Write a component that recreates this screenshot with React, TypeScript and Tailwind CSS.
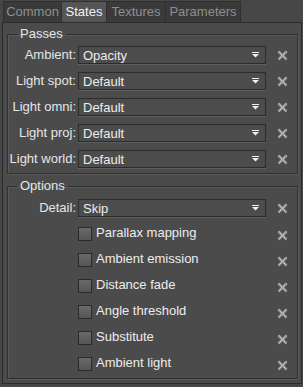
import React from 'react';

const tabs = [
  { label: 'Common', w: 'w-[59px]' },
  { label: 'States', w: 'w-[46px]', active: true },
  { label: 'Textures', w: 'w-[60px]' },
  { label: 'Parameters', w: 'w-[76px]' },
];

const passes = [
  { label: 'Ambient:', value: 'Opacity' },
  { label: 'Light spot:', value: 'Default' },
  { label: 'Light omni:', value: 'Default' },
  { label: 'Light proj:', value: 'Default' },
  { label: 'Light world:', value: 'Default' },
];

const options = ['Parallax mapping', 'Ambient emission', 'Distance fade', 'Angle threshold', 'Substitute', 'Ambient light'];

// dithered grey cross used as the "reset" button
const ClearIcon = () => (
  <svg width="11" height="11" viewBox="0 0 11 11" className="block">
    <path d="M1.5 1.5 L9.5 9.5 M9.5 1.5 L1.5 9.5" stroke="#8c8c8c" strokeWidth="2.6" />
    <path d="M1.5 1.5 L9.5 9.5 M9.5 1.5 L1.5 9.5" stroke="#d6d6d6" strokeWidth="1.2" strokeDasharray="1 1" />
  </svg>
);

const Combo = ({ value }: { value: string }) => (
  <div className="w-[188px] h-[18px] flex items-center justify-between pl-[4px] pr-[6px] bg-[#4c4c4c] border border-[#2c2c2c] shadow-[0_1px_0_#5e5e5e] text-[#ededed]">
    <span className="leading-none">{value}</span>
    <svg width="7" height="6" viewBox="0 0 7 6" className="block">
      <rect x="0" y="0" width="7" height="1" fill="#f0f0f0" />
      <path d="M0 2 H7 L3.5 5.5 Z" fill="#f0f0f0" />
    </svg>
  </div>
);

const Group = ({ title, children, className }: { title: string; children: React.ReactNode; className?: string }) => (
  <fieldset className={`border border-[#2f2f2f] shadow-[inset_1px_1px_0_#5a5a5a,1px_1px_0_#5a5a5a] ml-[4px] mr-[3px] ${className ?? ''}`}>
    <legend className="ml-[9px] px-[3px] text-[#e6e6e6] leading-[14px]">{title}</legend>
    {children}
  </fieldset>
);

const App: React.FC = () => {
  return (
    <div className="w-[303px] h-[387px] bg-[#474747] font-['Liberation_Sans',Arial,sans-serif] text-[13px] overflow-hidden">
      <div className="flex pl-[3px] pt-[1px]">
        {tabs.map((t) => (
          <div
            key={t.label}
            className={`${t.w} h-[21px] flex items-center justify-center border border-b-0 border-[#303030] -ml-px first:ml-0 ${
              t.active ? 'bg-[#555555] text-[#f2f2f2]' : 'bg-[#3a3a3a] text-[#8e8e8e]'
            }`}
          >
            {t.label}
          </div>
        ))}
      </div>
      <div className="ml-[2px] mr-[1px] h-[362px] border border-[#2c2c2c] bg-[#4b4b4b] pt-[4px]">
        <Group title="Passes" className="h-[147px]">
          <div className="flex flex-col gap-[8px] pt-[5px]">
            {passes.map((p) => (
              <div key={p.label} className="flex items-center h-[18px]">
                <span className="w-[70px] text-right text-[#e6e6e6] pr-[2px] shrink-0 whitespace-nowrap">{p.label}</span>
                <Combo value={p.value} />
                <span className="ml-[11px]"><ClearIcon /></span>
              </div>
            ))}
          </div>
        </Group>
        <Group title="Options" className="h-[200px] mt-[5px]">
          <div className="flex flex-col gap-[8px] pt-[6px]">
            <div className="flex items-center h-[18px]">
              <span className="w-[70px] text-right text-[#e6e6e6] pr-[2px] shrink-0">Detail:</span>
              <Combo value="Skip" />
              <span className="ml-[11px]"><ClearIcon /></span>
            </div>
            {options.map((o) => (
              <div key={o} className="flex items-center h-[18px]">
                <span className="w-[70px] shrink-0" />
                <span className="w-[14px] h-[14px] border border-[#2a2a2a] bg-gradient-to-b from-[#6a6a6a] to-[#555555] shrink-0" />
                <span className="ml-[4px] w-[170px] text-[#ededed] -mt-[3px]">{o}</span>
                <span className="ml-[11px] mt-[2px]"><ClearIcon /></span>
              </div>
            ))}
          </div>
        </Group>
      </div>
    </div>
  );
};

export default App;
